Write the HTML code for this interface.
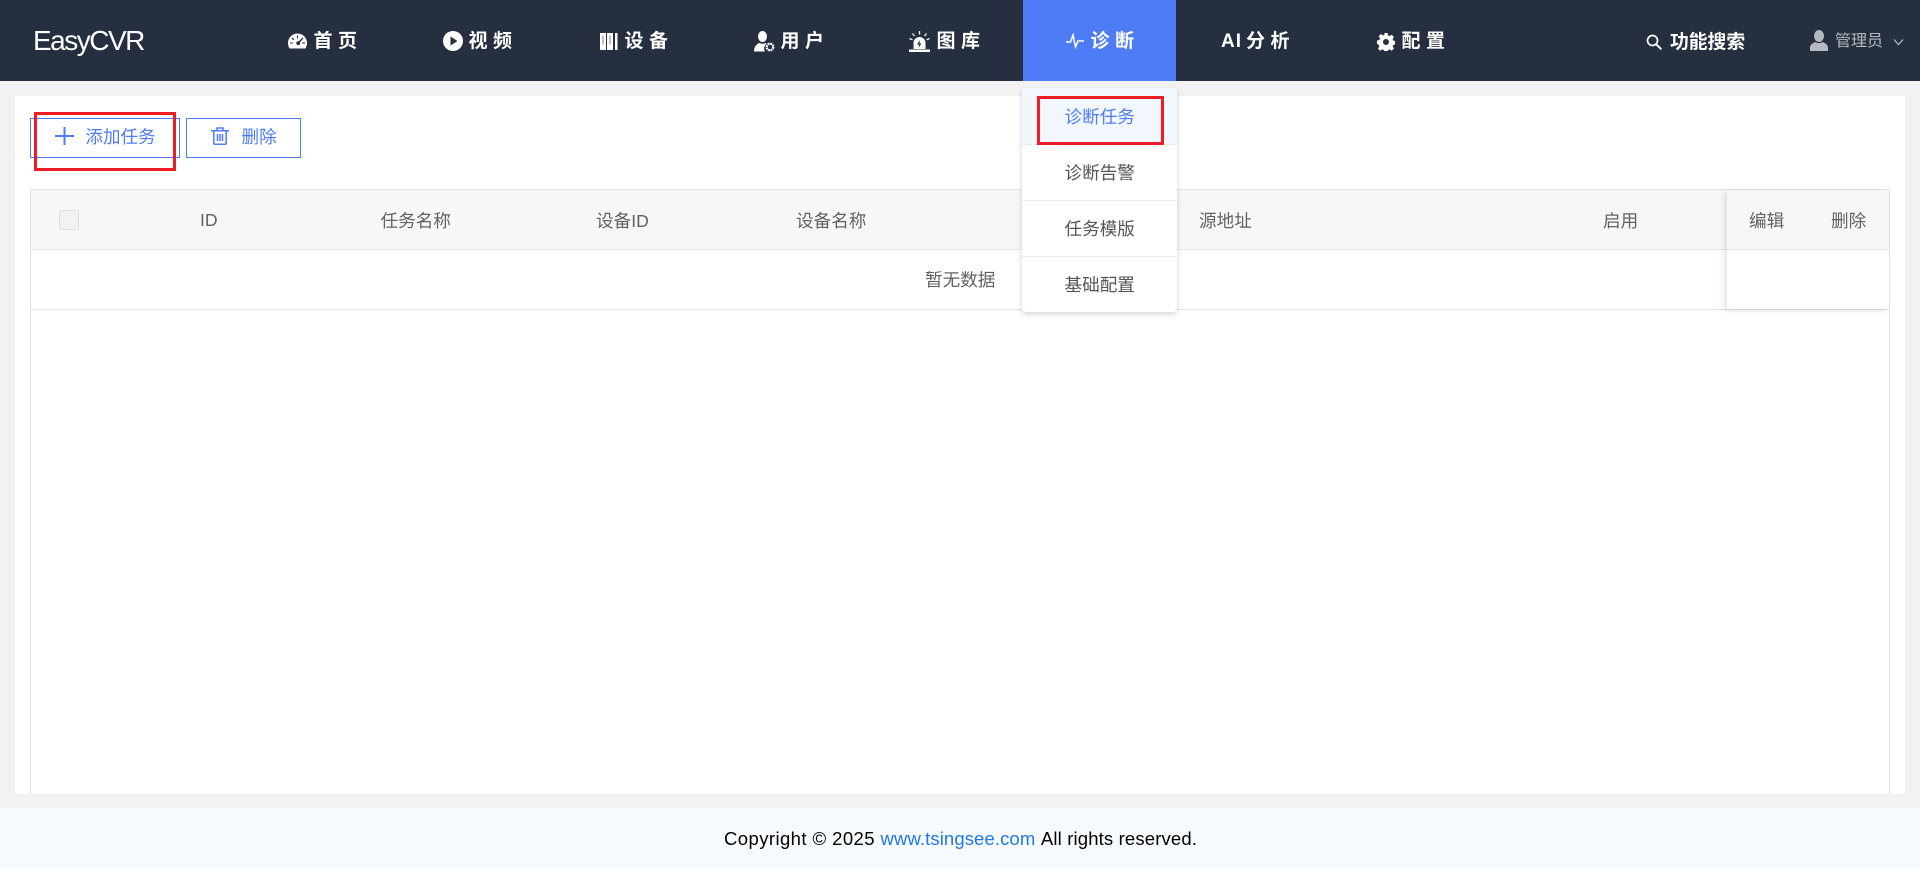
<!DOCTYPE html>
<html lang="zh"><head><meta charset="utf-8"><title>EasyCVR</title>
<style>
html,body{margin:0;padding:0;width:1920px;height:869px;overflow:hidden;background:#f2f2f2;font-family:"Liberation Sans","Noto Sans CJK SC",sans-serif}
.a,.t,svg{position:absolute}
.t{white-space:nowrap;line-height:24px;font-size:17.6px;color:#606266}
.n{color:#fff;font-weight:700;font-size:19px;letter-spacing:5.500px}
.b{color:#4e7cf6}
</style></head><body>
<div class="a" style="left:0;top:0;width:1920px;height:81px;background:#262f3f"></div>
<div class="a" style="left:1023px;top:0;width:153px;height:81px;background:#4e7cf6"></div>
<span class="t" style="left:33px;top:24px;line-height:34px;font-size:28px;letter-spacing:-1.5px;color:#fff">EasyCVR</span>

<svg style="left:288px;top:33px" width="19" height="16" viewBox="0 0 19 16"><path fill="#fff" fill-rule="evenodd" d="M9.500 0.500C4.300 0.500 0 4.800 0 10c0 2 .6 3.800 1.600 5.500h15.800C18.400 13.800 19 12 19 10 19 4.800 14.700.5 9.500.5zM9 2.500h1v3H9zM4.300 4.400l2 2-.8.800-2-2zM14.700 4.400l.8.800-3.500 4.100a2 2 0 1 1-1.100-1zM2 9.500h3v1H2zM14 9.500h3v1h-3z"/></svg>
<span class="t n" style="left:313.500px;top:30px">首页</span>

<svg style="left:443px;top:31px" width="20" height="20" viewBox="0 0 20 20"><circle cx="10" cy="10" r="10" fill="#fff"/><path fill="#262f3f" d="M7.500 5.500l7 4.500-7 4.500z"/></svg>
<span class="t n" style="left:468.500px;top:30px">视频</span>

<svg style="left:600px;top:33px" width="18" height="17" viewBox="0 0 18 17"><path fill="#fff" d="M0 0h6v17H0zM7 0h6v17H7zM15 0h2.500v17H15z"/><path fill="#262f3f" d="M2.500 2.500h1v9h-1zM9.500 2.500h1v9h-1z" opacity=".6"/></svg>
<span class="t n" style="left:624.500px;top:30px">设备</span>

<svg style="left:754px;top:31px" width="21" height="21" viewBox="0 0 21 21"><ellipse cx="8.500" cy="5.500" rx="4.500" ry="5.500" fill="#fff"/><path fill="#fff" d="M0 20.500c0-5 3-8 5.500-8.500 2 1 4 1 6 0l1 .6c-2.500 2-3 5.500-1.500 7.900z"/><circle cx="16" cy="16" r="3.300" fill="none" stroke="#fff" stroke-width="2.200" stroke-dasharray="2 .6"/></svg>
<span class="t n" style="left:780.500px;top:30px">用户</span>

<svg style="left:909px;top:31px" width="21" height="21" viewBox="0 0 21 21"><path fill="#fff" d="M4.500 18V12a6 6 0 0 1 12 0v6zM0 18.500h21V21H0z"/><path fill="#262f3f" d="M11 9l-3 4.500h2L9.500 17l3-4.500h-2z"/><path stroke="#fff" stroke-width="1.300" d="M10.500 0v3.500M3.500 2.500l2 2.500M17.500 2.500l-2 2.500M.5 7.500l3 1.300M20.500 7.500l-3 1.300"/></svg>
<span class="t n" style="left:936.500px;top:30px">图库</span>

<svg style="left:1066px;top:33px" width="18" height="16" viewBox="0 0 18 16"><path fill="none" stroke="#fff" stroke-width="1.500" d="M0 9h4.500L7 2l2.500 12L12 8h6"/></svg>
<span class="t n" style="left:1090.500px;top:30px">诊断</span>

<span class="t n" style="left:1221px;top:30px;letter-spacing:1px">AI</span>
<span class="t n" style="left:1246px;top:30px">分析</span>

<svg style="left:1377px;top:32.500px" width="18" height="18" viewBox="0 0 19 19"><path fill="#fff" fill-rule="evenodd" d="M7.800 0h3.400l.5 2.500 1.700.7 2.200-1.400 2.300 2.400-1.400 2.100.7 1.800 2.500.5v3.400l-2.500.5-.7 1.700 1.400 2.200-2.400 2.400-2.100-1.500-1.700.7-.5 2.500H7.800l-.5-2.500-1.700-.7-2.200 1.500-2.400-2.400 1.500-2.200-.7-1.700L0 11.300V7.900l2.500-.5.700-1.800-1.500-2.100 2.400-2.400 2.200 1.400 1.700-.7zM9.500 6.300a3.200 3.200 0 1 0 0 6.400 3.200 3.200 0 0 0 0-6.400z"/></svg>
<span class="t n" style="left:1401.500px;top:30px">配置</span>

<svg style="left:1646px;top:34px" width="16" height="16" viewBox="0 0 16 16"><circle cx="6.500" cy="6.500" r="5" fill="none" stroke="#fff" stroke-width="1.700"/><path d="M10.300 10.300l5 5" stroke="#fff" stroke-width="2"/></svg>
<span class="t" style="left:1670px;top:30px;color:#fff;font-weight:700;font-size:18.800px">功能搜索</span>

<svg style="left:1810px;top:30px" width="18" height="21" viewBox="0 0 18 21"><ellipse cx="9" cy="6" rx="5" ry="6" fill="#b4b8c0"/><path fill="#b4b8c0" d="M0 21v-3.500c0-3 3-4.500 5.500-5.500 2 1.500 5 1.500 7 0 2.500 1 5.500 2.500 5.500 5.500V21z"/></svg>
<span class="t" style="left:1835px;top:30px;font-size:16px;color:#b4b8c0">管理员</span>
<svg style="left:1893px;top:38px" width="11" height="8" viewBox="0 0 11 8"><path d="M1 1.500l4.500 5 4.500-5" fill="none" stroke="#b4b8c0" stroke-width="1.300"/></svg>

<div class="a" style="left:15px;top:96px;width:1890px;height:698px;background:#fff"></div>

<div class="a" style="left:30px;top:118px;width:150px;height:40px;box-sizing:border-box;border:1px solid #4e7cf6"></div>
<div class="a" style="left:186px;top:118px;width:115px;height:40px;box-sizing:border-box;border:1px solid #4e7cf6"></div>
<svg style="left:55px;top:127px" width="19" height="18" viewBox="0 0 19 18"><path d="M9.500 0v18M0 9h19" stroke="#4e7cf6" stroke-width="2"/></svg>
<span class="t b" style="left:85.500px;top:125px;font-size:17.500px">添加任务</span>
<svg style="left:211px;top:127px" width="18" height="18" viewBox="0 0 18 18"><path fill="none" stroke="#4e7cf6" stroke-width="1.500" d="M0 3.800h18M6 3.500V1h6v2.500M2.800 4v12a1.300 1.300 0 0 0 1.300 1.300h9.800a1.300 1.300 0 0 0 1.300-1.300V4M6.500 7v7M9 7v7M11.500 7v7"/></svg>
<span class="t b" style="left:241.500px;top:125px">删除</span>

<div class="a" style="left:30px;top:189px;width:1860px;height:605px;box-sizing:border-box;border:solid #e3e3e3;border-width:1px 1px 0 1px"></div>
<div class="a" style="left:31px;top:190px;width:1858px;height:59px;background:#f7f7f7;border-bottom:1px solid #e8e8e8"></div>
<div class="a" style="left:31px;top:309px;width:1858px;height:1px;background:#e3e3e3"></div>
<div class="a" style="left:1727px;top:190px;width:162px;height:119px;box-shadow:-3px 2px 6px rgba(0,0,0,.1)"></div>
<div class="a" style="left:1727px;top:190px;width:162px;height:59px;background:#f7f7f7;border-bottom:1px solid #e8e8e8"></div>
<div class="a" style="left:1727px;top:250px;width:162px;height:59px;background:#fff"></div>
<div class="a" style="left:59px;top:210px;width:20px;height:20px;box-sizing:border-box;border:1px solid #ddd;border-radius:2px;background:#f2f2f2"></div>

<span class="t" style="left:200px;top:208px">ID</span>
<span class="t" style="left:380.500px;top:208.500px">任务名称</span>
<span class="t" style="left:596px;top:208.500px">设备ID</span>
<span class="t" style="left:796px;top:208.500px">设备名称</span>
<span class="t" style="left:1199px;top:208.500px">源地址</span>
<span class="t" style="left:1603px;top:208.500px">启用</span>
<span class="t" style="left:1749px;top:208.500px">编辑</span>
<span class="t" style="left:1831px;top:208.500px">删除</span>
<span class="t" style="left:925px;top:267.500px">暂无数据</span>

<div class="a" style="left:1022px;top:88px;width:155px;height:224px;background:#fff;border-radius:4px;box-shadow:0 2px 6px rgba(0,0,0,.18);overflow:hidden">
<div class="a" style="left:0;top:0;width:155px;height:56px;background:#f2f7fe"></div>
<div class="a" style="left:0;top:56px;width:155px;height:1px;background:#ebebeb"></div>
<div class="a" style="left:0;top:112px;width:155px;height:1px;background:#ebebeb"></div>
<div class="a" style="left:0;top:168px;width:155px;height:1px;background:#ebebeb"></div>
</div>
<span class="t b" style="left:1064.500px;top:105px">诊断任务</span>
<span class="t" style="left:1064.500px;top:161px;color:#555">诊断告警</span>
<span class="t" style="left:1064.500px;top:217px;color:#555">任务模版</span>
<span class="t" style="left:1064.500px;top:273px;color:#555">基础配置</span>

<div class="a" style="left:34px;top:112px;width:142px;height:59px;box-sizing:border-box;border:3px solid #ee1c25"></div>
<div class="a" style="left:1037px;top:96px;width:127px;height:49px;box-sizing:border-box;border:3px solid #ee1c25"></div>

<div class="a" style="left:0;top:807px;width:1920px;height:62px;background:#f7fafd"></div>
<span class="t" style="left:724px;top:827px;font-size:18.500px;letter-spacing:.42px;color:#000">Copyright © 2025 <span style="color:#1e78e6;letter-spacing:.1px">www.tsingsee.com</span> <span style="letter-spacing:.15px">All rights reserved.</span></span>
</body></html>
